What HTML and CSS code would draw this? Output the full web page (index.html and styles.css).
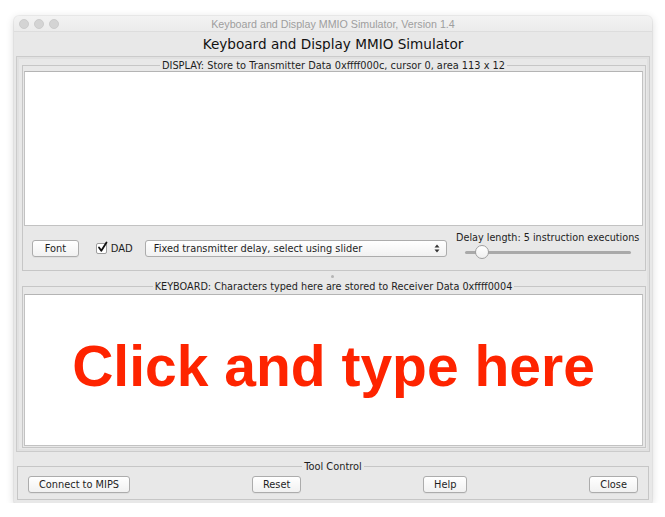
FILE: index.html
```
<!DOCTYPE html>
<html>
<head>
<meta charset="utf-8">
<link rel="stylesheet" href="styles.css">
</head>
<body>
<div class="window">
  <div class="titlebar">
    <div class="lights"><span></span><span></span><span></span></div>
    <div class="wtitle">Keyboard and Display MMIO Simulator, Version 1.4</div>
  </div>
  <div class="content">
    <div class="heading">Keyboard and Display MMIO Simulator</div>
    <div class="mainbox">
      <fieldset class="tbox display">
        <legend>DISPLAY: Store to Transmitter Data 0xffff000c, cursor 0, area 113 x 12</legend>
        <div class="textarea disp"></div>
        <div class="controls">
          <button class="btn font">Font</button>
          <span class="check"><svg width="13" height="13" viewBox="0 0 13 13"><path d="M3 6.5 L5.3 9.8 L10.5 1.5" fill="none" stroke="#111" stroke-width="1.8" stroke-linecap="round" stroke-linejoin="round"/></svg></span>
          <span class="dad">DAD</span>
          <div class="combo"><span>Fixed transmitter delay, select using slider</span>
            <svg width="6" height="9" viewBox="0 0 6 9"><path d="M3 0.5 L5.5 3.5 L0.5 3.5 Z M3 8.5 L5.5 5.5 L0.5 5.5 Z" fill="#333"/></svg>
          </div>
          <div class="delay">
            <div class="dlabel">Delay length: 5 instruction executions</div>
            <div class="slider"><div class="track"></div><div class="knob"></div></div>
          </div>
        </div>
      </fieldset>
      <div class="divider"><span></span></div>
      <fieldset class="tbox keyboard">
        <legend>KEYBOARD: Characters typed here are stored to Receiver Data 0xffff0004</legend>
        <div class="textarea kb">Click and type here</div>
      </fieldset>
    </div>
    <fieldset class="tbox tool">
      <legend>Tool Control</legend>
      <div class="buttons">
        <button class="btn">Connect to MIPS</button>
        <button class="btn">Reset</button>
        <button class="btn">Help</button>
        <button class="btn">Close</button>
      </div>
    </fieldset>
  </div>
</div>
</body>
</html>
```
FILE: styles.css
```
* { box-sizing: border-box; }
body {
  margin: 0;
  background: #ffffff;
  font-family: "DejaVu Sans", sans-serif;
  font-size: 9.8px;
  color: #1e1e1e;
}
.window {
  margin: 16px 0 0 14px;
  width: 638px;
  height: 487px;
  background: #e8e8e8;
  border-radius: 5px 5px 2px 2px;
  box-shadow: 0 0 0 1px rgba(0,0,0,0.05), 0 2px 9px rgba(0,0,0,0.16);
  display: flex;
  flex-direction: column;
}
.titlebar {
  height: 16px;
  background: linear-gradient(#f3f3f3, #ebebeb);
  border-bottom: 1px solid #dddddd;
  border-radius: 5px 5px 0 0;
  display: flex;
  align-items: center;
  justify-content: center;
  position: relative;
}
.lights {
  position: absolute;
  left: 5px;
  top: 3px;
  display: flex;
  gap: 5px;
}
.lights span {
  width: 10px;
  height: 10px;
  border-radius: 50%;
  background: #d4d4d4;
  border: 1px solid #cccccc;
}
.wtitle {
  font-family: "Liberation Sans", sans-serif;
  font-size: 10.7px;
  color: #9e9e9e;
}
.content {
  flex: 1;
  padding: 0 2px;
  display: flex;
  flex-direction: column;
}
.heading {
  height: 24px;
  line-height: 25px;
  text-align: center;
  font-size: 13.6px;
  color: #111;
}
.mainbox {
  height: 396px;
  border: 1px solid #cbcbcb;
  box-shadow: inset 0 0 0 2px #e1e1e1;
  padding: 3px 3px 3px 5px;
  display: flex;
  flex-direction: column;
}
.tbox {
  margin: 0;
  border: 1px solid #c6c6c6;
  padding: 0 2px 1px 1px;
  min-width: 0;
}
.tbox legend {
  margin: 0 auto;
  padding: 0 2px;
  line-height: 11px;
  font-size: 9.8px;
  color: #1e1e1e;
}
.keyboard legend { font-size: 9.7px; }
.textarea {
  background: #ffffff;
  border: 1px solid #c2c2c2;
  border-top-color: #b4b4b4;
}
.disp { height: 155px; }
.controls {
  height: 43px;
  display: flex;
  align-items: center;
  padding-left: 8px;
}
.btn {
  height: 17px;
  padding: 0 10px;
  border: 1px solid #acacac;
  border-radius: 3px;
  background: linear-gradient(#ffffff, #f1f1f1);
  box-shadow: 0 1px 0 rgba(0,0,0,0.04);
  font-family: inherit;
  font-size: 9.8px;
  color: #1e1e1e;
  line-height: 15px;
}
.font { width: 47px; padding: 0; margin-top: 2px; }
.check {
  margin-left: 17px;
  margin-top: 2px;
  width: 11px;
  height: 11px;
  border: 1px solid #9d9d9d;
  border-radius: 2px;
  background: #fff;
  position: relative;
}
.check svg { position: absolute; left: -1px; top: -3px; }
.dad { margin-left: 4px; margin-top: 2px; font-size: 10px; }
.combo {
  margin-left: 12px;
  margin-top: 2px;
  width: 304px;
  height: 17px;
  border: 1px solid #acacac;
  border-radius: 3px;
  background: linear-gradient(#ffffff, #f1f1f1);
  display: flex;
  align-items: center;
  justify-content: space-between;
  padding: 0 6px 0 8px;
}
.delay {
  margin-left: 9px;
  width: 188px;
  display: flex;
  flex-direction: column;
}
.dlabel { line-height: 11px; margin-top: -5px; white-space: nowrap; font-size: 9.65px; }
.slider {
  position: relative;
  height: 16px;
  margin-left: 9px;
  width: 166px;
}
.track {
  position: absolute;
  left: 0; right: 0; top: 8px;
  height: 3px;
  border-radius: 2px;
  background: #a9a9a9;
}
.knob {
  position: absolute;
  left: 10px;
  top: 2px;
  width: 14px;
  height: 14px;
  border-radius: 50%;
  background: linear-gradient(#ffffff, #f0f0f0);
  border: 1px solid #a0a0a0;
}
.divider {
  height: 11px;
  display: flex;
  justify-content: center;
  align-items: flex-end;
  padding-bottom: 3px;
}
.divider span {
  width: 3px; height: 3px; border-radius: 50%;
  background: #b5b5b5;
  margin-right: 4px;
}
.keyboard .textarea { margin-top: 2px; }
.kb {
  height: 152px;
  padding-top: 43px;
  text-align: center;
  font-family: "Liberation Sans", Arial, sans-serif;
  font-weight: bold;
  font-size: 57px;
  line-height: 57px;
  color: #fe2400;
}
.tool {
  margin: 9px 1px 0 1px;
  height: 39px;
  padding: 0 10px;
}
.buttons {
  display: flex;
  justify-content: space-between;
  padding-top: 4px;
}
```
